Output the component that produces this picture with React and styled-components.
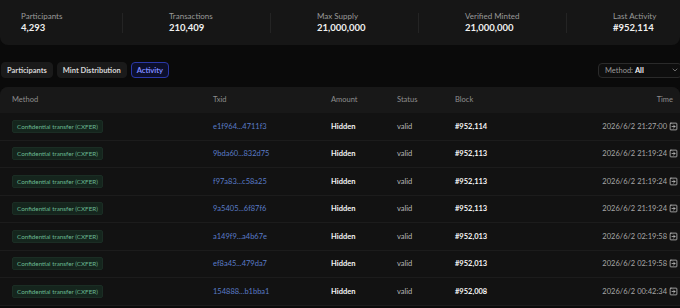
import React from 'react';
import styled, {createGlobalStyle} from 'styled-components';
import {SquareArrowRight, ChevronDown} from 'lucide-react';

const GlobalStyle = createGlobalStyle`
  html, body {
    margin: 0;
    padding: 0;
    background: #0a0a0a;
    font-family: Lato, "Noto Sans", sans-serif;
    color: #e8e8e8;
    overflow: hidden;
  }
`;

const Page = styled.div`
  width: 680px;
  height: 308px;
  overflow: hidden;
`;

const StatsCard = styled.section`
  display: flex;
  gap: 46px;
  height: 45px;
  padding: 0 0 0 21px;
  box-sizing: border-box;
  align-items: center;
  background: #161616;
  border-radius: 0 0 8px 8px;
`;

const Stat = styled.div`
  flex: 0 0 101px;
  height: 20px;
  display: flex;
  flex-direction: column;
  justify-content: center;
  gap: 3px;
  border-right: ${({last}) => (last ? 'none' : '1px solid #242424')};
`;

const StatLabel = styled.span`
  font-size: 8px;
  color: #9a9a9a;
  line-height: 1;
  white-space: nowrap;
`;

const StatValue = styled.span`
  font-size: 9.5px;
  font-weight: 700;
  color: #f0f0f0;
  line-height: 1;
  white-space: nowrap;
`;

const Toolbar = styled.div`
  display: flex;
  align-items: center;
  justify-content: space-between;
  margin-top: 17px;
  padding-left: 1px;
  height: 16px;
`;

const Tabs = styled.div`
  display: flex;
  gap: 4px;
`;

const Tab = styled.button`
  height: 16px;
  padding: 0 5px;
  font-family: inherit;
  font-size: 7.5px;
  font-weight: 700;
  border-radius: 4px;
  cursor: pointer;
  border: 1px solid ${({active}) => (active ? '#2b38a8' : '#1a1a1a')};
  background: ${({active}) => (active ? '#0c0f2c' : '#1a1a1a')};
  color: ${({active}) => (active ? '#7f8cff' : '#d6d6d6')};
`;

const Select = styled.div`
  width: 84px;
  height: 15px;
  box-sizing: border-box;
  margin-right: -2px;
  display: flex;
  align-items: center;
  justify-content: space-between;
  padding: 0 2px 0 6px;
  border: 1px solid #2a2a2a;
  border-radius: 4px;
  background: #0e0e0e;
  font-size: 7.5px;
  color: #9a9a9a;
`;

const SelectValue = styled.span`
  color: #f0f0f0;
  font-weight: 700;
`;

const TableCard = styled.section`
  margin-top: 9px;
  background: #121212;
  border-radius: 8px 8px 0 0;
  overflow: hidden;
`;

const Row = styled.div`
  display: grid;
  grid-template-columns: 201px 118px 66px 58px 1fr auto;
  align-items: center;
  height: ${({head}) => (head ? '26px' : '27.5px')};
  padding: 0 2px 0 12px;
  background: ${({head}) => (head ? '#181818' : 'transparent')};
  border-bottom: 1px solid ${({head}) => (head ? '#181818' : '#1c1c1c')};
  box-sizing: border-box;
  font-size: 7.5px;
`;

const HeadCell = styled.div`
  color: #8e8e8e;
  text-align: ${({right}) => (right ? 'right' : 'left')};
  padding-right: ${({right}) => (right ? '5px' : '0')};
`;

const Badge = styled.span`
  display: inline-block;
  height: 11px;
  line-height: 11px;
  padding: 0 4px;
  border-radius: 2px;
  background: #15251d;
  border: 1px solid #1b2d24;
  color: #6ab892;
  font-size: 6.3px;
  white-space: nowrap;
`;

const Txid = styled.span`
  color: #5a7cc8;
`;

const Strong = styled.span`
  color: #f4f4f4;
  font-weight: 700;
`;

const Muted = styled.span`
  color: #b8b8b8;
`;

const Time = styled.div`
  display: flex;
  align-items: center;
  gap: 2px;
  color: #a8a8a8;
  white-space: nowrap;
`;

const stats = [
  ['Participants', '4,293'],
  ['Transactions', '210,409'],
  ['Max Supply', '21,000,000'],
  ['Verified Minted', '21,000,000'],
  ['Last Activity', '#952,114'],
];

const rows = [
  ['e1f964...4711f3', '#952,114', '2026/6/2 21:27:00'],
  ['9bda60...832d75', '#952,113', '2026/6/2 21:19:24'],
  ['f97a83...c58a25', '#952,113', '2026/6/2 21:19:24'],
  ['9a5405...6f87f6', '#952,113', '2026/6/2 21:19:24'],
  ['a149f9...a4b67e', '#952,013', '2026/6/2 02:19:58'],
  ['ef8a45...479da7', '#952,013', '2026/6/2 02:19:58'],
  ['154888...b1bba1', '#952,008', '2026/6/2 00:42:34'],
];

export default function App() {
  return (
    <Page>
      <GlobalStyle />
      <StatsCard>
        {stats.map(([label, value], i) => (
          <Stat key={label} last={i === stats.length - 1}>
            <StatLabel>{label}</StatLabel>
            <StatValue>{value}</StatValue>
          </Stat>
        ))}
      </StatsCard>

      <Toolbar>
        <Tabs>
          <Tab>Participants</Tab>
          <Tab>Mint Distribution</Tab>
          <Tab active>Activity</Tab>
        </Tabs>
        <Select>
          <span>
            Method: <SelectValue>All</SelectValue>
          </span>
          <ChevronDown size={8} color="#9a9a9a" />
        </Select>
      </Toolbar>

      <TableCard>
        <Row head>
          <HeadCell>Method</HeadCell>
          <HeadCell>Txid</HeadCell>
          <HeadCell>Amount</HeadCell>
          <HeadCell>Status</HeadCell>
          <HeadCell>Block</HeadCell>
          <HeadCell right>Time</HeadCell>
        </Row>
        {rows.map(([txid, block, time]) => (
          <Row key={txid}>
            <div>
              <Badge>Confidential transfer (CXFER)</Badge>
            </div>
            <Txid>{txid}</Txid>
            <Strong>Hidden</Strong>
            <Muted>valid</Muted>
            <Strong>{block}</Strong>
            <Time>
              {time}
              <SquareArrowRight size={9} strokeWidth={2} color="#c8c8c8" />
            </Time>
          </Row>
        ))}
      </TableCard>
    </Page>
  );
}
